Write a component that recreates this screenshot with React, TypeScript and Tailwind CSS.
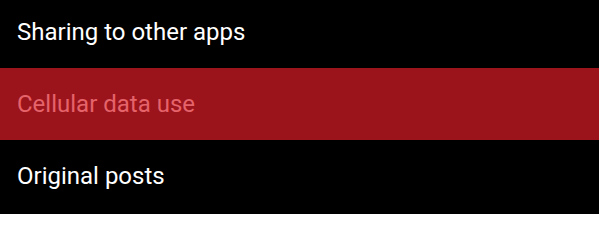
const items = [
  { label: "Sharing to other apps", active: false },
  { label: "Cellular data use", active: true },
  { label: "Original posts", active: false },
];

export default function App() {
  return (
    <div className="w-[599px] h-[214px] overflow-hidden bg-black font-['Roboto',sans-serif]">
      <div className="-mt-[4px] flex flex-col">
        {items.map((item) => (
          <div
            key={item.label}
            className={
              item.active
                ? "h-[72px] flex items-center px-[17px] bg-[#9b141b] text-[#e5636a] text-[24px]"
                : "h-[72px] flex items-center px-[17px] text-white text-[24px]"
            }
          >
            {item.label}
          </div>
        ))}
      </div>
    </div>
  );
}
